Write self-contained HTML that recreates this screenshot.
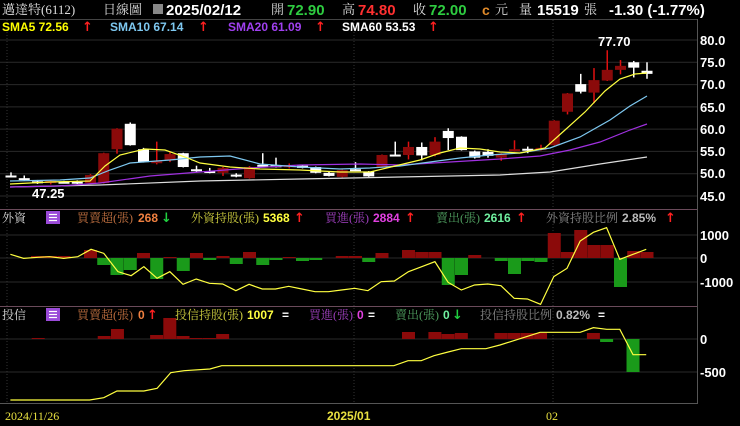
<!DOCTYPE html>
<html><head><meta charset="utf-8"><style>
body{margin:0;background:#000;width:740px;height:426px;overflow:hidden;font-family:"Liberation Sans","Noto Sans CJK TC",sans-serif;}
svg{position:absolute;left:0;top:0}
text{font-family:"Liberation Sans","Noto Sans CJK TC",sans-serif}
text.m{font-family:"Liberation Serif","Noto Serif CJK SC",serif}
text.a{font-family:"DejaVu Sans",sans-serif;font-size:13px;font-weight:bold}
</style></head><body>
<svg id="s" width="740" height="426" xmlns="http://www.w3.org/2000/svg">
<rect width="740" height="426" fill="#000"/>
<g id="grid" stroke="#2a2a2a" stroke-width="1"></g>
<g id="c"></g>
<line x1="0" y1="19.5" x2="697" y2="19.5" stroke="#444"/>
<line x1="697.5" y1="19" x2="697.5" y2="404" stroke="#555"/>
<line x1="0" y1="209.5" x2="697" y2="209.5" stroke="#6a4a5a"/>
<line x1="0" y1="306.5" x2="697" y2="306.5" stroke="#6a4a5a"/>
<line x1="0" y1="403.5" x2="697" y2="403.5" stroke="#555"/>
<text class="m" x="2" y="14" font-size="13" fill="#ddd">邁達特(6112)</text>
<text class="m" x="103" y="14" font-size="13" fill="#ddd">日線圖</text>
<rect x="153" y="4" width="10" height="10" fill="#888"/>
<text x="166" y="15" font-size="15" font-weight="bold" fill="#fff">2025/02/12</text>
<text class="m" x="271" y="14" font-size="13" fill="#ddd">開</text>
<text x="287" y="15" font-size="15" font-weight="bold" fill="#2ecc40">72.90</text>
<text class="m" x="342" y="14" font-size="13" fill="#ddd">高</text>
<text x="358" y="15" font-size="15" font-weight="bold" fill="#ff3030">74.80</text>
<text class="m" x="413" y="14" font-size="13" fill="#ddd">收</text>
<text x="429" y="15" font-size="15" font-weight="bold" fill="#2ecc40">72.00</text>
<text x="482" y="15" font-size="14" font-weight="bold" fill="#e08a2a">c</text>
<text class="m" x="495" y="14" font-size="13" fill="#ddd">元</text>
<text class="m" x="519" y="14" font-size="13" fill="#ddd">量</text>
<text x="537" y="15" font-size="15" font-weight="bold" fill="#fff">15519</text>
<text class="m" x="584" y="14" font-size="13" fill="#ddd">張</text>
<text x="609" y="15" font-size="15" font-weight="bold" fill="#fff">-1.30 (-1.77%)</text>
<g font-size="12" font-weight="bold">
<text x="2" y="31" fill="#ffff00">SMA5 72.56</text><text class="a" x="82" y="31" fill="#ff2020">↑</text>
<text x="110" y="31" fill="#7ec8f0">SMA10 67.14</text><text class="a" x="198" y="31" fill="#ff2020">↑</text>
<text x="228" y="31" fill="#a040f0">SMA20 61.09</text><text class="a" x="315" y="31" fill="#ff2020">↑</text>
<text x="342" y="31" fill="#fff">SMA60 53.53</text><text class="a" x="428" y="31" fill="#ff2020">↑</text>
</g>
<g font-size="13" font-weight="bold" fill="#fff">
<text x="700" y="45">80.0</text><text x="700" y="89">70.0</text><text x="700" y="67">75.0</text>
<text x="700" y="112">65.0</text><text x="700" y="134">60.0</text><text x="700" y="156">55.0</text>
<text x="700" y="178">50.0</text><text x="700" y="201">45.0</text>
<text x="700" y="240">1000</text><text x="700" y="263">0</text><text x="700" y="287">-1000</text>
<text x="700" y="344">0</text><text x="700" y="377">-500</text>
<text x="598" y="46">77.70</text><text x="32" y="198">47.25</text>
</g>
<text class="m" x="2" y="222" font-size="12" fill="#ddd">外資</text>
<rect x="46" y="211" width="14" height="13" fill="#9a4ad8"/>
<g stroke="#fff" stroke-width="1.2"><line x1="49" y1="214.5" x2="57" y2="214.5"/><line x1="49" y1="217.5" x2="57" y2="217.5"/><line x1="49" y1="220.5" x2="57" y2="220.5"/></g>
<g font-size="12">
<text class="m" x="77" y="222" fill="#c07040">買賣超(張)</text><text x="138" y="222" font-weight="bold" fill="#f08040">268</text><text class="a" x="161" y="222" fill="#20d040">↓</text>
<text class="m" x="191" y="222" fill="#d0d040">外資持股(張)</text><text x="263" y="222" font-weight="bold" fill="#ffff40">5368</text><text class="a" x="294" y="222" fill="#ff2020">↑</text>
<text class="m" x="325" y="222" fill="#a040c0">買進(張)</text><text x="373" y="222" font-weight="bold" fill="#e040e0">2884</text><text class="a" x="405" y="222" fill="#ff2020">↑</text>
<text class="m" x="436" y="222" fill="#50a060">賣出(張)</text><text x="484" y="222" font-weight="bold" fill="#70f0a0">2616</text><text class="a" x="516" y="222" fill="#ff2020">↑</text>
<text class="m" x="546" y="222" fill="#888">外資持股比例</text><text x="622" y="222" font-weight="bold" fill="#bbb">2.85%</text><text class="a" x="665" y="222" fill="#ff2020">↑</text>
</g>
<text class="m" x="2" y="319" font-size="12" fill="#ddd">投信</text>
<rect x="46" y="308" width="14" height="13" fill="#9a4ad8"/>
<g stroke="#fff" stroke-width="1.2"><line x1="49" y1="311.5" x2="57" y2="311.5"/><line x1="49" y1="314.5" x2="57" y2="314.5"/><line x1="49" y1="317.5" x2="57" y2="317.5"/></g>
<g font-size="12">
<text class="m" x="77" y="319" fill="#c07040">買賣超(張)</text><text x="138" y="319" font-weight="bold" fill="#f08040">0</text><text class="a" x="147" y="319" fill="#ff2020">↑</text>
<text class="m" x="175" y="319" fill="#d0d040">投信持股(張)</text><text x="247" y="319" font-weight="bold" fill="#ffff40">1007</text><text x="282" y="319" fill="#fff" font-weight="bold">=</text>
<text class="m" x="309" y="319" fill="#a040c0">買進(張)</text><text x="357" y="319" font-weight="bold" fill="#e040e0">0</text><text x="368" y="319" fill="#fff" font-weight="bold">=</text>
<text class="m" x="395" y="319" fill="#50a060">賣出(張)</text><text x="443" y="319" font-weight="bold" fill="#70f0a0">0</text><text class="a" x="452" y="319" fill="#20d040">↓</text>
<text class="m" x="480" y="319" fill="#888">投信持股比例</text><text x="556" y="319" font-weight="bold" fill="#bbb">0.82%</text><text x="598" y="319" fill="#fff" font-weight="bold">=</text>
</g>
<text class="m" x="5" y="420" font-size="12" fill="#e8e040">2024/11/26</text>
<text x="327" y="420" font-size="12" font-weight="bold" fill="#e8e040">2025/01</text>
<text class="m" x="546" y="420" font-size="12" fill="#e8e040">02</text>
</svg>
<script>
var NS="http://www.w3.org/2000/svg";
function el(p,t,a){var e=document.createElementNS(NS,t);for(var k in a)e.setAttribute(k,a[k]);document.getElementById(p).appendChild(e);return e;}
function Y(p){return 40+(80-p)*4.457;}
function X(i){return 11+13.25*i;}
[80,75,70,65,60,55,50,45].forEach(function(p){el('grid','line',{x1:0,x2:697,y1:Y(p),y2:Y(p)});});
[235,258,282,339,372].forEach(function(y){el('grid','line',{x1:0,x2:697,y1:y,y2:y});});
[7,354,553].forEach(function(x){el('grid','line',{x1:x,x2:x,y1:20,y2:403,'stroke-dasharray':'1,2',stroke:'#333'});});
var C=[['w',49.6,49.3,50.3,49.2],['w',49.0,48.8,49.6,48.5],['w',48.3,48.0,48.6,47.7],['r',48.4,47.9,48.6,47.6],['w',48.2,48.0,48.4,47.8],['w',48.2,48.0,48.5,47.7],
['r',49.7,47.9,49.9,47.8],['r',54.6,47.9,54.7,47.8],['r',60.1,55.5,60.2,54.5],['w',61.2,56.4,61.5,56.3],['w',55.5,52.6,55.8,52.5],['r',52.8,52.5,57.2,52.1],
['r',54.4,53.0,54.8,52.6],['w',54.6,51.5,54.7,51.4],['w',51.0,50.6,51.8,50.4],['w',50.6,50.3,51.3,50.1],['r',51.3,50.2,51.5,49.5],['w',49.8,49.4,50.1,49.2],
['r',51.5,49.0,51.7,48.9],['w',52.0,51.7,54.6,51.6],['w',51.9,51.5,53.6,51.4],['r',51.9,51.6,52.3,51.2],['w',51.8,51.3,52.0,51.2],['w',51.5,50.2,51.6,50.1],
['w',50.2,49.5,50.4,49.4],['r',50.8,49.3,50.9,49.2],['w',51.0,50.7,52.6,50.6],['w',50.5,49.4,50.6,49.3],
['r',54.2,51.5,54.3,51.4],['w',54.3,54.0,57.2,53.9],['r',56.0,54.2,57.2,53.2],['w',56.0,54.1,57.0,53.0],['r',57.2,54.2,58.2,53.9],['w',59.6,58.0,60.2,55.3],
['w',58.3,55.3,58.4,55.2],['w',55.0,53.6,55.2,53.4],['w',54.9,54.0,55.5,53.6],['r',54.5,53.6,54.6,52.9],['r',55.5,55.1,57.5,55.0],['w',55.6,55.2,56.1,54.6],
['r',55.8,55.3,56.5,55.2],['r',61.9,56.4,62.0,56.3],['r',68.0,63.9,68.1,63.3],['w',70.1,68.4,72.4,68.0],['r',71.0,68.2,73.7,65.8],['r',73.3,70.9,77.7,70.8],
['r',74.2,73.3,75.5,72.3],['w',75.0,73.8,75.3,71.6],['w',73.1,72.4,75.0,71.3]];
C.forEach(function(c,i){var x=X(i),col=c[0]=='r'?'#8b0a0a':'#fff',wc=c[0]=='r'?'#e01010':'#fff';
el('c','line',{x1:x,x2:x,y1:Y(c[3]),y2:Y(c[4]),stroke:wc,'stroke-width':1.5});
var h=Math.max(Y(c[2])-Y(c[1]),2);el('c','rect',{x:x-5.5,y:Y(c[1]),width:11,height:h,fill:col});});
function pl(pts,col,w){el('c','polyline',{points:pts.map(function(p){return p[0]+','+p[1]}).join(' '),fill:'none',stroke:col,'stroke-width':w||1.2});}
pl([[10,187],[100,185],[200,181],[300,179],[400,177],[500,175],[550,172],[600,164],[647,157]],'#ddd');
pl([[10,187],[60,186],[100,183],[150,176],[200,172],[250,168],[300,165],[360,164],[400,165],[450,162],[500,159],[540,156],[570,150],[600,142],[630,130],[647,124]],'#a030e0');
pl([[10,181],[60,180],[90,178],[110,170],[130,163],[170,160],[200,157],[230,156],[260,164],[300,167],[340,169],[370,168],[400,166],[430,162],[460,158],[490,155],[520,153],[550,148],[580,137],[610,120],[630,106],[647,96]],'#7ec8f0');
pl([[10,184],[50,182],[90,181],[105,166],[120,155],[145,149],[165,150],[185,157],[200,163],[230,167],[260,169],[300,170],[340,172],[370,172],[395,166],[420,160],[440,153],[460,148],[480,149],[500,152],[520,153],[545,148],[565,130],[585,112],[605,91],[620,79],[635,74],[647,73]],'#ffff40');
var F={2:2,3:2,4:2,6:8,7:-7,8:-17,9:-12,10:5,11:-21,12:1,13:-13,14:5,15:-2,16:2,17:-6,18:6,19:-7,20:-2,21:1,22:-3,23:-2,25:2,26:2,27:-4,28:5,30:8,31:6,32:6,33:-27,34:-17,35:3,37:-3,38:-16,39:-3,40:-4,41:25,42:6,43:28,44:13,45:13,46:-29,47:7,48:6};
for(var k in F){var v=F[k],x=X(+k);el('c','rect',{x:x-6.5,y:v>0?258-v:258,width:13,height:Math.abs(v),fill:v>0?'#8b0a0a':'#1a9a1a'});}
var TB=[[81,1],[221,3],[249,10],[332,4],[360,21],[388,3],[416,1],[444,1],[472,5],[866,7],[922,7],[950,5],[978,6],[1062,6],[1090,6],[1118,6],[1146,6],[1258,6],[1286,-3],[1342,-33]];
TB.forEach(function(b){var x=b[0]/2.12,v=b[1];el('c','rect',{x:x-6.5,y:v>0?339-v:339,width:13,height:Math.abs(v),fill:v>0?'#8b0a0a':'#1a9a1a'});});
function zl(a){return a.map(function(p){return [p[0]/2.12,225+p[1]/3];});}
pl(zl([[22,88],[50,100],[80,97],[105,95],[135,100],[165,95],[193,73],[220,85],[250,140],[278,152],[305,125],[333,160],[360,140],[388,178],[416,162],[444,175],[472,177],[500,197],[528,178],[556,192],[584,192],[612,184],[640,192],[668,200],[696,200],[724,195],[752,190],[780,197],[808,170],[836,168],[866,140],[894,125],[922,110],[950,172],[978,195],[1006,180],[1034,177],[1062,182],[1090,220],[1118,222],[1146,238],[1174,155],[1202,130],[1230,48],[1258,22],[1286,8],[1314,103],[1342,88],[1370,73]]),'#ffff40');
pl(zl([[22,525],[190,525],[220,518],[248,498],[305,498],[333,490],[362,443],[390,437],[445,432],[470,422],[835,422],[865,407],[893,407],[920,392],[950,381],[978,371],[1030,371],[1060,360],[1145,322],[1230,322],[1258,308],[1286,313],[1314,313],[1342,389],[1370,389]]),'#ffff40');
</script>
</body></html>
